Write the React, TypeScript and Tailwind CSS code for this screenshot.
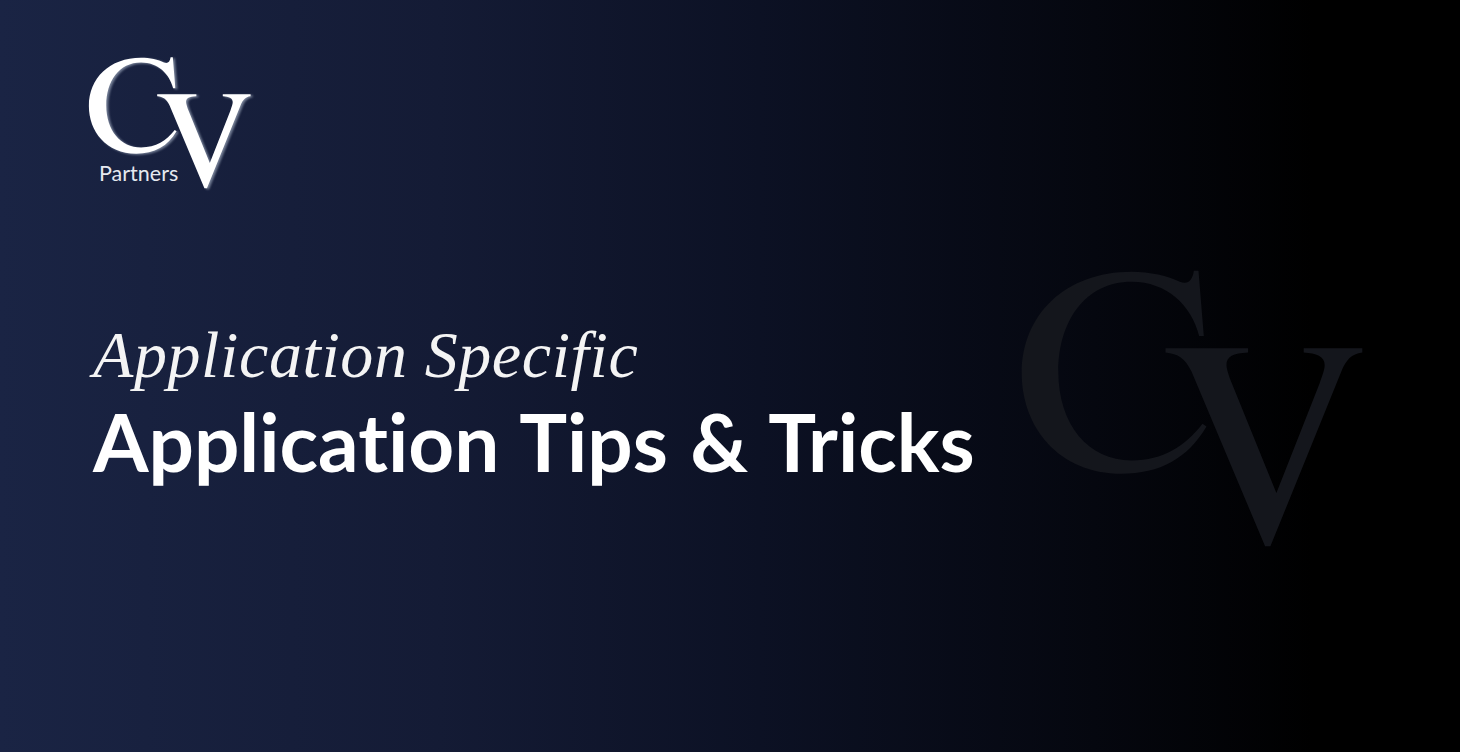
function CvMark({ className }: { className: string }) {
  return (
    <svg viewBox="60 60 1030 835" className={className} fill="currentColor" aria-hidden="true">
      <path d="M582 62 H596 L612 258 H598 C575 165 500 95 395 95 C255 95 175 215 175 365 C175 525 265 632 395 632 C490 632 555 590 608 522 L620 530 C565 625 480 672 365 672 C175 672 65 530 65 370 C65 195 195 65 395 65 C450 65 505 78 540 95 C565 105 578 90 582 62 Z" />
      <path d="M497 295 H745 V308 C700 310 680 320 680 345 C680 355 685 370 690 385 L830 730 L960 400 C968 375 975 360 975 345 C975 320 950 310 912 308 V295 H1088 V308 C1055 312 1040 330 1025 365 L812 890 H796 L575 365 C555 325 535 312 497 308 Z" />
    </svg>
  );
}

export default function App() {
  return (
    <div className="relative flex flex-col w-[1460px] h-[752px] overflow-hidden pt-[57px] pl-[87px] bg-[linear-gradient(90deg,#1a2444_0%,#141b35_30%,#0c1124_52%,#05070f_75%,#000000_90%)]">
      <CvMark className="absolute left-[1020px] top-[270px] w-[343px] h-[278px] text-[#14161c]" />
      <div className="relative w-[165px] h-[132px] shrink-0">
        <CvMark className="w-[165px] h-[132px] text-white drop-shadow-[2px_1px_1px_rgba(150,160,180,0.75)]" />
        <span className="absolute left-[12px] top-[103px] text-[21.5px] leading-[26px] text-[#e6e9f0] font-['Lato',sans-serif]">Partners</span>
      </div>
      <div className="relative flex flex-col gap-[2px] ml-[6px] mt-[128px] w-fit">
        <div className="text-[66px] leading-[76px] italic text-[#f4f4f4] tracking-[0.6px] whitespace-nowrap font-['Liberation_Serif',serif]">Application Specific</div>
        <div className="text-[80px] leading-[92px] font-bold text-white whitespace-nowrap [word-spacing:3px] [font-variant-ligatures:none] font-['Lato',sans-serif]">Application Tips &amp; Tricks</div>
      </div>
    </div>
  );
}
